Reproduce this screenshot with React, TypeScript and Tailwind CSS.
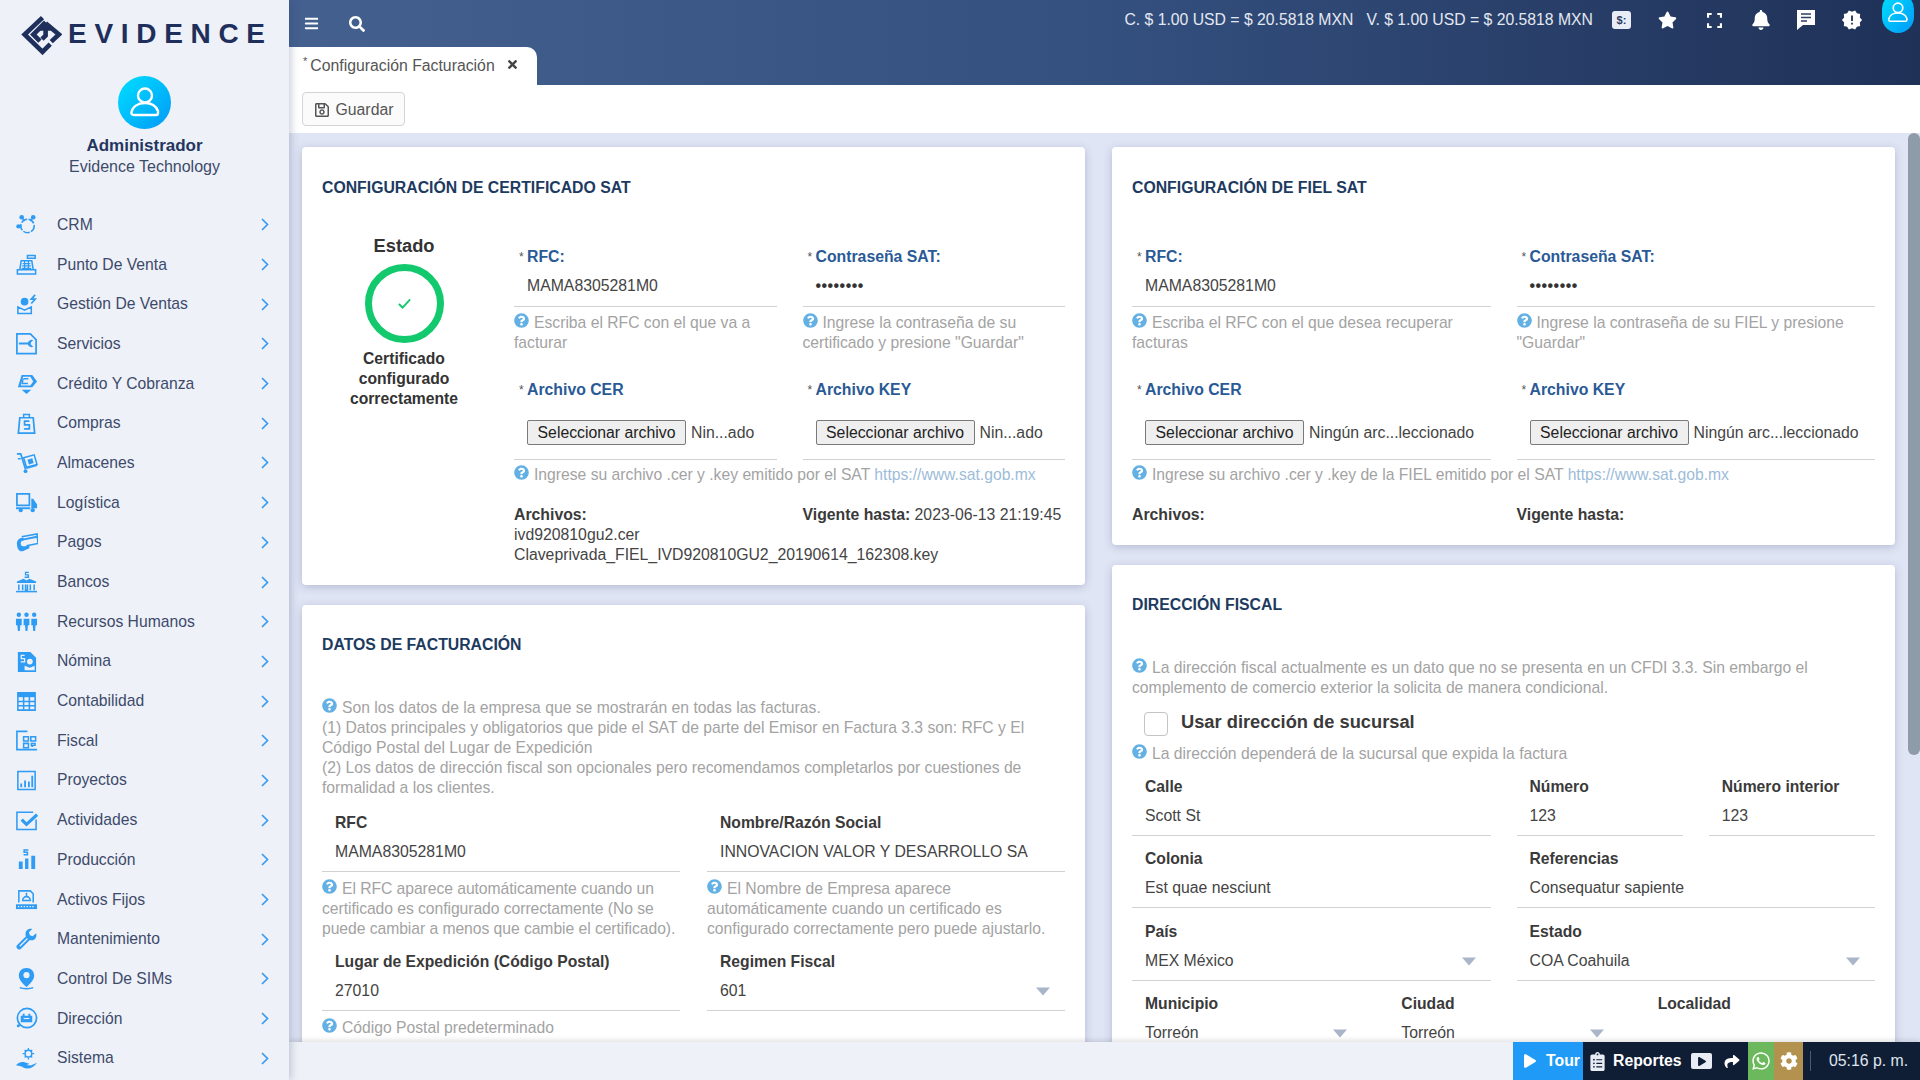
import type { ReactNode } from 'react';
import {
  FaBars,
  FaBell,
  FaCog,
  FaPlay,
  FaQuestionCircle,
  FaRegSave,
  FaSearch,
  FaShare,
  FaStar,
  FaTimes,
  FaWhatsapp,
  FaClipboardList,
} from 'react-icons/fa';
import { MdNewReleases } from 'react-icons/md';

// Sidebar glyphs, drawn by hand on a 24 box
const s = { fill: 'none', stroke: 'currentColor', strokeWidth: 1.6 };

const MENU: { label: string; icon: ReactNode }[] = [
  {
    label: 'CRM',
    icon: (
      <>
        <circle cx="13" cy="13.5" r="7" {...s} strokeDasharray="7 1.5" />
        <circle cx="7" cy="4.5" r="2.4" fill="currentColor" />
        <circle cx="19" cy="4.5" r="2.4" fill="currentColor" />
        <circle cx="3.5" cy="14" r="2.2" fill="currentColor" />
        <path d="M8 6l2 2.5M18 6l-2 2.5M5 14h2" {...s} />
      </>
    ),
  },
  {
    label: 'Punto De Venta',
    icon: (
      <>
        <path d="M2.5 17.5h19v4.5h-19zM5 17.5l1.5-9.5h11l1.5 9.5" {...s} />
        <path d="M8 11h8M7.5 13.5h9M7 16h10M10 8v8M14 8v8" {...s} strokeWidth={1.3} />
        <path d="M13 2.500h8v3h-8z" {...s} />
      </>
    ),
  },
  {
    label: 'Gestión De Ventas',
    icon: (
      <>
        <circle cx="10" cy="9" r="4" fill="currentColor" />
        <path d="M3 14.500v7h14v-7l-7 3.500z" {...s} />
        <path d="M21 2l-4 4.500h4l-4 4.500" {...s} strokeWidth={1.8} />
      </>
    ),
  },
  {
    label: 'Servicios',
    icon: (
      <>
        <path d="M2 2h14l6 6v14.500H2z" {...s} strokeWidth={1.8} />
        <path d="M4 11h9.500a4 4 0 0 1 5.500-2.500l-2.500 2.500v2l2.500 2.500a4 4 0 0 1-5.500-2.500H4z" fill="currentColor" />
      </>
    ),
  },
  {
    label: 'Crédito Y Cobranza',
    icon: (
      <>
        <path d="M7 3h11l5 7-5 6H3z" fill="currentColor" />
        <path d="M8.500 5h7.500l3 5-3 4H6z" fill="#eef1f7" />
        <path d="M9 7h5M8.500 7l-1 5h6" {...s} strokeWidth={1.4} />
        <path d="M7 18.500h10l-5 4.500z" fill="currentColor" />
      </>
    ),
  },
  {
    label: 'Compras',
    icon: (
      <>
        <path d="M5 6h14l1.500 16H3.500z" {...s} strokeWidth={1.8} />
        <path d="M9 6V2.500h6V6" {...s} />
        <path d="M15 9.500H10v4h5v4H9.500" {...s} strokeWidth={1.8} />
      </>
    ),
  },
  {
    label: 'Almacenes',
    icon: (
      <>
        <path d="M2 3h4l5 16" {...s} strokeWidth={1.8} />
        <path d="M9 7l11-3 3 10-11 3zM3 8l3 0" {...s} />
        <path d="M13 9l5-1.500 1.500 5-5 1.500z" fill="currentColor" />
        <circle cx="11" cy="21" r="2" fill="currentColor" />
        <path d="M12 18l11-3" {...s} />
      </>
    ),
  },
  {
    label: 'Logística',
    icon: (
      <>
        <path d="M2 3h13v12H2z" {...s} strokeWidth={1.8} />
        <path d="M17 8h2l4 6v4H17z" fill="currentColor" />
        <path d="M1 17h15v2H1z" fill="currentColor" />
        <circle cx="6" cy="20" r="2.200" fill="currentColor" />
        <circle cx="18.500" cy="20" r="2.200" fill="currentColor" />
      </>
    ),
  },
  {
    label: 'Pagos',
    icon: (
      <>
        <path d="M7 6l16-3 1 10-12 2.500" {...s} strokeWidth={1.6} />
        <path d="M8 9l15-3" {...s} strokeWidth={2} />
        <path d="M2 13c0-4 3-6 7-6v3c-2 0-3 1-3 3s1 3 4 3l5-1v3l-7 3c-3 1-6-2-6-8z" fill="currentColor" />
      </>
    ),
  },
  {
    label: 'Bancos',
    icon: (
      <>
        <path d="M2 11l7-3 3 2 3-2 7 3v1.500H2z" fill="currentColor" />
        <path d="M14.500 1.500H11v2.500h3v2.500H10" {...s} strokeWidth={1.4} />
        <path d="M4 14v6M8 14v6M16 14v6M20 14v6M11 14v6h2v-6" {...s} />
        <path d="M1 21.500h22" {...s} />
      </>
    ),
  },
  {
    label: 'Recursos Humanos',
    icon: (
      <>
        <circle cx="4" cy="5" r="2.300" fill="currentColor" />
        <circle cx="12" cy="5" r="2.300" fill="currentColor" />
        <circle cx="20" cy="5" r="2.300" fill="currentColor" />
        <path d="M1 9h6v7H5.500l-.5 6H3l-.5-6H1zM9 9h6v7h-1.500l-.5 6h-2l-.5-6H9zM17 9h6v7h-1.500l-.5 6h-2l-.5-6H17z" fill="currentColor" />
      </>
    ),
  },
  {
    label: 'Nómina',
    icon: (
      <>
        <path d="M3 2h13l6 6v15H3z" fill="currentColor" />
        <path d="M10 5.500H6.500V9H10v3.500H6" fill="none" stroke="#eef1f7" strokeWidth="1.3" />
        <circle cx="15.500" cy="12" r="3" fill="#eef1f7" />
        <path d="M10 16.500l5.500 2 5-2v4.500H10z" fill="#eef1f7" />
      </>
    ),
  },
  {
    label: 'Contabilidad',
    icon: (
      <>
        <path d="M3 3h18v18H3z" {...s} />
        <path d="M3 3h18v4.500H3z" fill="currentColor" />
        <path d="M3 12h18M3 16.500h18M9 7v14M15 7v14" {...s} />
      </>
    ),
  },
  {
    label: 'Fiscal',
    icon: (
      <>
        <path d="M13 2.500H2v19h21" {...s} strokeWidth={1.7} />
        <path d="M9 8h5v4.500H9zM16.500 8h5v4.500h-5zM9 15h5v4.500H9z" {...s} />
        <path d="M17 15h4v2h-4zM17 18h2" {...s} strokeWidth={1.4} />
      </>
    ),
  },
  {
    label: 'Proyectos',
    icon: (
      <>
        <path d="M3 2.500h18v19H3z" {...s} />
        <path d="M6.500 15v4M10.500 12v7M14.500 13v6M18 7v12" {...s} strokeWidth={1.9} />
      </>
    ),
  },
  {
    label: 'Actividades',
    icon: (
      <>
        <path d="M19 3.500H2v18h20V11" {...s} />
        <path d="M7 11l5 5 11-10" fill="none" stroke="currentColor" strokeWidth="3.200" />
      </>
    ),
  },
  {
    label: 'Producción',
    icon: (
      <>
        <path d="M4 14h4v8H4zM10.500 11h3.500v11h-3.500zM17 8h4v14h-4z" fill="currentColor" />
        <path d="M14 2H9.500v2.500H13V7H9" {...s} strokeWidth={1.5} />
      </>
    ),
  },
  {
    label: 'Activos Fijos',
    icon: (
      <>
        <path d="M4 15V3h12l3 3v9" {...s} />
        <path d="M1 17h22v5H1z" fill="currentColor" />
        <path d="M12 5v4M8 13a4 4 0 0 1 8 0z" {...s} />
        <path d="M3 19.500h18" stroke="#eef1f7" strokeWidth="1.200" strokeDasharray="1.500 1.500" />
      </>
    ),
  },
  {
    label: 'Mantenimiento',
    icon: (
      <>
        <path
          d="M22 5.500l-3.500 3-3-1-1-3L18 1c-3-1-7 1-7 5 0 1 0 2 .5 2.500L2 18c-2 2 2 6 4 4l9.500-9.500c4 1.500 8-2 6.500-7z"
          fill="currentColor"
        />
        <path d="M5 19l8-8" stroke="#eef1f7" strokeWidth="1.300" />
      </>
    ),
  },
  {
    label: 'Control De SIMs',
    icon: (
      <>
        <path d="M12 1C7 1 4 4.500 4 9c0 4.500 5 9 8 12 3-3 8-7.500 8-12 0-4.500-3-8-8-8z" fill="currentColor" />
        <circle cx="12" cy="8.500" r="3.200" fill="#eef1f7" />
        <path d="M5 21.500c3 1.500 11 1.500 14 0" {...s} />
      </>
    ),
  },
  {
    label: 'Dirección',
    icon: (
      <>
        <circle cx="12.500" cy="11.500" r="10" {...s} strokeWidth={1.8} />
        <path d="M6 9h12v7H6zM8 7h2v2H8zM14 7h2v2h-2z" fill="currentColor" />
        <path d="M9 12h6" stroke="#eef1f7" strokeWidth="1.200" />
        <circle cx="3.500" cy="19.500" r="1.600" fill="currentColor" />
      </>
    ),
  },
  {
    label: 'Sistema',
    icon: (
      <>
        <circle cx="14" cy="7" r="3.500" {...s} />
        <path d="M14 1v2M14 11v2M8 7h2M18 7h2M10 3l1.500 1.500M18 3l-1.500 1.500M10 11l1.500-1.500M18 11l-1.500-1.500" {...s} strokeWidth={1.3} />
        <path d="M1 19c3-3 6-4 9-3l5 1.500-3 1.500h5l6-2.500c-3 4-6 6-10 6-3 0-5-2-7-2.500z" fill="currentColor" />
      </>
    ),
  },
];

function Sidebar() {
  return (
    <aside className="w-[289px] shrink-0 bg-[#eef1f7] flex flex-col shadow-[2px_0_8px_rgba(50,60,110,0.25)] z-20">
      <div className="h-[205px] shrink-0 flex flex-col items-center">
        {/* Logo */}
        <div className="flex items-center h-[42px] mt-[13px] w-full pl-[21px]">
          <svg viewBox="0 0 40 40" className="w-[41px] h-[41px] shrink-0" fill="none" stroke="#1e2f5c" strokeWidth="4.500">
            <path d="M21 3.500L3.500 20 21 37l7.500-7.500" />
            <path d="M24 8L12 20l6.500 6.500" />
            <path d="M18 14h11.500M24 9l13 11-7.500 7" />
            <path d="M24 15v6l-3.500 3.500" />
          </svg>
          <span className="ml-[6px] text-[28px] leading-none font-bold tracking-[7.700px] text-[#1e2f5c]">EVIDENCE</span>
        </div>
        {/* Avatar */}
        <div className="mt-[21px] w-[53px] h-[53px] rounded-full bg-gradient-to-br from-[#00e0ff] to-[#0a98f5] flex items-center justify-center">
          <UserGlyph className="w-[38px] h-[38px]" />
        </div>
        <div className="mt-[7px] text-[17px] leading-[20px] font-bold text-[#24365f]">Administrador</div>
        <div className="mt-px text-[16px] leading-[20px] text-[#3d4a6b]">Evidence Technology</div>
      </div>
      <nav className="flex flex-col">
        {MENU.map((item) => (
          <div key={item.label} className="h-[39.700px] flex items-center pl-[15px] pr-[20px] text-[#3d4a6b]">
            <svg viewBox="0 0 24 24" className="w-[23px] h-[23px] shrink-0 text-[#2e9bf5]">
              {item.icon}
            </svg>
            <span className="ml-[19px] flex-1 text-[15.700px] leading-[20px]">{item.label}</span>
            <svg viewBox="0 0 8 13" className="w-[8px] h-[13px]" fill="none" stroke="#3a9bf0" strokeWidth="1.700">
              <path d="M1 1l5.500 5.500L1 12" />
            </svg>
          </div>
        ))}
      </nav>
    </aside>
  );
}

function UserGlyph({ className }: { className: string }) {
  return (
    <svg viewBox="0 0 38 38" className={className} fill="none" stroke="#fff" strokeWidth="2.400" strokeLinecap="round">
      <circle cx="19" cy="11.500" r="7" />
      <path d="M29 31H8c-2 0-3-1-2.500-3 1-5 6-9 13.500-9 6 0 11 3 13 8v2c0 1.500-1 2-2 2" />
    </svg>
  );
}

function Header() {
  return (
    <header className="h-[85px] shrink-0 bg-gradient-to-r from-[#43608f] via-[#34507f] to-[#1f3157] flex flex-col">
      <div className="h-[47px] pb-[7px] flex items-center text-white">
        <FaBars className="ml-[15px] mt-[7px] w-[15px] h-[15px]" />
        <FaSearch className="ml-[30px] mt-[7px] w-[16px] h-[16px]" />
        <div className="flex-1" />
        <span className="text-[15.750px] leading-[20px] text-[#e3e8f2]">C. $ 1.00 USD = $ 20.5818 MXN</span>
        <span className="ml-[13px] text-[15.750px] leading-[20px] text-[#e3e8f2]">V. $ 1.00 USD = $ 20.5818 MXN</span>
        <span className="ml-[19px] w-[19px] h-[18px] rounded-[3px] bg-[#e8edf5] text-[#2c4063] text-[11px] font-bold flex items-center justify-center">
          $:
        </span>
        <FaStar className="ml-[27px] w-[19px] h-[18px]" />
        <svg viewBox="0 0 16 16" className="ml-[30px] w-[15px] h-[15px]" fill="none" stroke="#fff" strokeWidth="2.500">
          <path d="M1 5V1h4M11 1h4v4M15 11v4h-4M5 15H1v-4" />
        </svg>
        <FaBell className="ml-[30px] w-[18px] h-[20px]" />
        <svg viewBox="0 0 18 20" className="ml-[27px] w-[18px] h-[20px]">
          <path d="M0 0h18v15H6l-6 5z" fill="#fff" />
          <path d="M4 4h10M4 7.500h10M4 11h6" stroke="#2c4063" strokeWidth="1.500" />
        </svg>
        <MdNewReleases className="ml-[26px] w-[22px] h-[22px]" />
        <div className="ml-[19px] mr-[6px] mb-[7px] -mt-[7px] w-[32px] h-[40px] rounded-b-full rounded-t-full bg-gradient-to-br from-[#00e0ff] to-[#0a98f5] flex items-center justify-center">
          <UserGlyph className="w-[26px] h-[26px]" />
        </div>
      </div>
      <div className="h-[38px] w-[248px] bg-white rounded-tr-[10px] flex items-center pl-[14px] text-[#555]">
        <span className="text-[11px] self-start mt-[6px] mr-[3px]">*</span>
        <span className="text-[15.800px] leading-[20px]">Configuración Facturación</span>
        <FaTimes className="ml-[12px] -mt-[3px] w-[11px] h-[13px] text-[#444]" />
      </div>
    </header>
  );
}

function QuestionMark() {
  return <FaQuestionCircle className="inline w-[15px] h-[15px] text-[#62b0e4] mr-[5px] align-[-1px] relative -top-[1px]" />;
}

function Help({ children, className = '' }: { children: ReactNode; className?: string }) {
  return (
    <div className={`text-[15.700px] leading-[20px] text-[#a3a3a3] ${className}`}>
      <QuestionMark />
      {children}
    </div>
  );
}

function Label({ children }: { children: ReactNode }) {
  return <div className="h-[21px] pt-[1px] px-[13px] text-[15.700px] leading-[20px] font-bold text-[#3a3a3a]">{children}</div>;
}

function Arrow() {
  return (
    <svg viewBox="0 0 16 9" className="w-[16px] h-[9px] shrink-0">
      <path d="M1 0.500h14L8 8.500z" fill="#a9b5c9" />
    </svg>
  );
}

function Field({ label, value, select }: { label: string; value: string; select?: boolean }) {
  return (
    <div className="min-w-0">
      <Label>{label}</Label>
      <div className="h-[39px] border-b border-[#d2d2d2] pl-[13px] pr-[14px] flex items-center justify-between text-[15.800px] text-[#444]">
        <span>{value}</span>
        {select && <Arrow />}
      </div>
    </div>
  );
}

function SatLabel({ children }: { children: ReactNode }) {
  return (
    <div className="pl-[5px] flex text-[15.800px] leading-[20px] font-bold text-[#2a5a96]">
      <span className="w-[8px] text-[12px] font-normal text-[#555]">*</span>
      {children}
    </div>
  );
}

function FileInput({ name }: { name: string }) {
  return (
    <div className="h-[60px] border-b border-[#d2d2d2] pl-[13px] pt-[6px] flex items-center">
      <span className="h-[25px] w-[159px] shrink-0 border border-[#7a7a7a] rounded-[2px] bg-[#efefef] text-[15.800px] text-[#222] flex items-center justify-center">
        Seleccionar archivo
      </span>
      <span className="ml-[5px] text-[15.800px] text-[#444] whitespace-nowrap">{name}</span>
    </div>
  );
}

function Card({ title, children, className = '' }: { title: string; children: ReactNode; className?: string }) {
  return (
    <section className={`bg-white rounded-[4px] shadow-[0_2px_8px_rgba(50,60,110,0.25)] px-[20px] ${className}`}>
      <h2 className="text-[15.800px] leading-[20px] font-bold text-[#1d3a5f]">{title}</h2>
      {children}
    </section>
  );
}

function SatForm({
  help1,
  help2,
  help3,
  fileName,
  files,
}: {
  help1: string;
  help2: string;
  help3: string;
  fileName: string;
  files: ReactNode;
}) {
  return (
    <div>
      <div className="grid grid-cols-2 gap-x-[26px]">
        <div>
          <SatLabel>RFC:</SatLabel>
          <div className="h-[40px] border-b border-[#d2d2d2] pl-[13px] pb-[2px] flex items-center text-[15.800px] text-[#444]">MAMA8305281M0</div>
          <Help className="mt-[6px]">{help1}</Help>
        </div>
        <div>
          <SatLabel>Contraseña SAT:</SatLabel>
          <div className="h-[40px] border-b border-[#d2d2d2] pl-[13px] pb-[2px] flex items-center text-[15.800px] font-bold tracking-[0.500px] text-[#333]">
            ••••••••
          </div>
          <Help className="mt-[6px]">{help2}</Help>
        </div>
      </div>
      <div className="grid grid-cols-2 gap-x-[26px] mt-[27px]">
        <div>
          <SatLabel>Archivo CER</SatLabel>
          <FileInput name={fileName} />
        </div>
        <div>
          <SatLabel>Archivo KEY</SatLabel>
          <FileInput name={fileName} />
        </div>
      </div>
      <div className="mt-[5px] text-[15.700px] leading-[20px] text-[#a3a3a3]">
        <QuestionMark />
        {help3} <span className="text-[#9dbcd9]">https://www.sat.gob.mx</span>
      </div>
      {files}
    </div>
  );
}

function Footer() {
  return (
    <footer className="h-[38px] shrink-0 bg-[#eef1f7] shadow-[0_-2px_5px_rgba(0,0,0,0.12)] flex justify-end text-white z-10">
      <div className="w-[70px] bg-[#1f9bf7] flex items-center pl-[11px]">
        <FaPlay className="w-[12px] h-[14px]" />
        <span className="ml-[10px] text-[15.800px] font-bold">Tour</span>
      </div>
      <div className="w-[165px] bg-[#0f1e35] flex items-center pl-[6px]">
        <FaClipboardList className="w-[17px] h-[19px] text-[#e8edf5]" />
        <span className="ml-[7px] text-[15.800px] font-bold">Reportes</span>
        <span className="ml-[10px] w-[21px] h-[16px] rounded-[2px] bg-[#e8edf5] flex items-center justify-center">
          <FaPlay className="w-[8px] h-[9px] text-[#0f1e35]" />
        </span>
        <FaShare className="ml-[11px] w-[18px] h-[15px]" />
      </div>
      <div className="w-[26px] bg-[#6cb85c] flex items-center justify-center">
        <FaWhatsapp className="w-[20px] h-[20px]" />
      </div>
      <div className="w-[29px] bg-[#b3924f] flex items-center justify-center">
        <FaCog className="w-[18px] h-[18px]" />
      </div>
      <div className="w-[117px] bg-[#0f1e35] flex items-center">
        <span className="ml-[7px] w-px h-[20px] bg-[#4a5a72]" />
        <span className="ml-[18px] text-[15.800px] text-[#dfe5ee] whitespace-nowrap">05:16 p. m.</span>
      </div>
    </footer>
  );
}

export default function App() {
  return (
    <div className="w-[1920px] h-[1080px] flex overflow-hidden font-['Liberation_Sans',Arial,sans-serif] bg-[#e0e5f5]">
      <Sidebar />
      <div className="flex-1 min-w-0 flex flex-col">
        <Header />
        <div className="h-[48px] shrink-0 bg-white pl-[13px] pt-[7px]">
          <button className="h-[34px] w-[103px] pt-[1px] border border-[#d4d4d4] rounded-[4px] bg-[#fbfbfb] flex items-center justify-center text-[15.800px] text-[#555]">
            <FaRegSave className="w-[16px] h-[16px] mr-[6px]" />
            Guardar
          </button>
        </div>
        <div className="flex-1 min-h-0 flex">
          <main className="flex-1 min-w-0 overflow-hidden pl-[13px] pr-[13px] pt-[14px] grid grid-cols-2 gap-x-[27px] items-start">
            {/* Left column */}
            <div className="flex flex-col gap-[20px]">
              <Card title="CONFIGURACIÓN DE CERTIFICADO SAT" className="pt-[31px]">
                <div className="flex mt-[37px] pb-[20px]">
                  <div className="w-[164px] mr-[28px] shrink-0 flex flex-col items-center text-center text-[#333]">
                    <div className="text-[18.300px] leading-[22px] font-bold">Estado</div>
                    <div className="mt-[7px] w-[79px] h-[79px] rounded-full border-[7px] border-[#13c96d] flex items-center justify-center">
                      <svg viewBox="0 0 16 16" className="w-[15px] h-[15px]" fill="none" stroke="#13c96d" strokeWidth="2">
                        <path d="M2 8.500l4 4 8-9" />
                      </svg>
                    </div>
                    <div className="mt-[6px] text-[15.700px] leading-[20px] font-bold">
                      Certificado
                      <br />
                      configurado
                      <br />
                      correctamente
                    </div>
                  </div>
                  <div className="flex-1 min-w-0 pt-[12px]">
                    <SatForm
                      help1="Escriba el RFC con el que va a facturar"
                      help2={'Ingrese la contraseña de su certificado y presione "Guardar"'}
                      help3="Ingrese su archivo .cer y .key emitido por el SAT"
                      fileName="Nin...ado"
                      files={
                        <div className="grid grid-cols-2 gap-x-[26px] mt-[20px] text-[15.800px] leading-[20px] text-[#444]">
                          <div>
                            <b className="text-[#3a3a3a]">Archivos:</b>
                          </div>
                          <div className="whitespace-nowrap">
                            <b className="text-[#3a3a3a]">Vigente hasta:</b> 2023-06-13 21:19:45
                          </div>
                          <div className="col-span-2">
                            ivd920810gu2.cer
                            <br />
                            Claveprivada_FIEL_IVD920810GU2_20190614_162308.key
                          </div>
                        </div>
                      }
                    />
                  </div>
                </div>
              </Card>
              <Card title="DATOS DE FACTURACIÓN" className="pt-[30px] pb-[20px]">
                <Help className="mt-[43px]">
                  Son los datos de la empresa que se mostrarán en todas las facturas.
                  <br />
                  (1) Datos principales y obligatorios que pide el SAT de parte del Emisor en Factura 3.3 son: RFC y El Código Postal del Lugar de Expedición
                  <br />
                  (2) Los datos de dirección fiscal son opcionales pero recomendamos completarlos por cuestiones de formalidad a los clientes.
                </Help>
                <div className="grid grid-cols-2 gap-x-[27px] mt-[14px]">
                  <Field label="RFC" value="MAMA8305281M0" />
                  <Field label="Nombre/Razón Social" value="INNOVACION VALOR Y DESARROLLO SA" />
                  <Help className="mt-[7px] tracking-[-0.050px]">El RFC aparece automáticamente cuando un certificado es configurado correctamente (No se puede cambiar a menos que cambie el certificado).</Help>
                  <Help className="mt-[7px]">El Nombre de Empresa aparece automáticamente cuando un certificado es configurado correctamente pero puede ajustarlo.</Help>
                </div>
                <div className="grid grid-cols-2 gap-x-[27px] mt-[12px]">
                  <Field label="Lugar de Expedición (Código Postal)" value="27010" />
                  <Field label="Regimen Fiscal" value="601" select />
                  <Help className="mt-[7px]">Código Postal predeterminado</Help>
                </div>
              </Card>
            </div>
            {/* Right column */}
            <div className="flex flex-col gap-[20px]">
              <Card title="CONFIGURACIÓN DE FIEL SAT" className="pt-[31px]">
                <div className="mt-[49px] pb-[20px]">
                  <SatForm
                    help1="Escriba el RFC con el que desea recuperar facturas"
                    help2={'Ingrese la contraseña de su FIEL y presione "Guardar"'}
                    help3="Ingrese su archivo .cer y .key de la FIEL emitido por el SAT"
                    fileName="Ningún arc...leccionado"
                    files={
                      <div className="grid grid-cols-2 gap-x-[26px] mt-[20px] text-[15.800px] leading-[20px] font-bold text-[#3a3a3a]">
                        <div>Archivos:</div>
                        <div>Vigente hasta:</div>
                      </div>
                    }
                  />
                </div>
              </Card>
              <Card title="DIRECCIÓN FISCAL" className="pt-[30px] pb-[20px]">
                <Help className="mt-[43px]">
                  La dirección fiscal actualmente es un dato que no se presenta en un CFDI 3.3. Sin embargo el complemento de comercio exterior la solicita de manera condicional.
                </Help>
                <div className="mt-[14px] h-[32px] flex items-start pl-[12px]">
                  <span className="w-[24px] h-[24px] border border-[#c4c4c4] rounded-[4px]" />
                  <span className="ml-[13px] text-[18.300px] leading-[20px] font-bold text-[#3a3a3a]">Usar dirección de sucursal</span>
                </div>
                <Help>La dirección dependerá de la sucursal que expida la factura</Help>
                <div className="grid grid-cols-2 gap-x-[26px] mt-[12px]">
                  <Field label="Calle" value="Scott St" />
                  <div className="grid grid-cols-2 gap-x-[26px]">
                    <Field label="Número" value="123" />
                    <Field label="Número interior" value="123" />
                  </div>
                </div>
                <div className="grid grid-cols-2 gap-x-[26px] mt-[12px]">
                  <Field label="Colonia" value="Est quae nesciunt" />
                  <Field label="Referencias" value="Consequatur sapiente" />
                </div>
                <div className="grid grid-cols-2 gap-x-[26px] mt-[13px]">
                  <Field label="País" value="MEX México" select />
                  <Field label="Estado" value="COA Coahuila" select />
                </div>
                <div className="grid grid-cols-3 gap-x-[26px] mt-[12px]">
                  <Field label="Municipio" value="Torreón" select />
                  <Field label="Ciudad" value="Torreón" select />
                  <Label>Localidad</Label>
                </div>
              </Card>
            </div>
          </main>
          {/* Scrollbar */}
          <div className="w-[12px] shrink-0">
            <div className="h-[622px] bg-[#8d9ca8] rounded-[6px]" />
          </div>
        </div>
        <Footer />
      </div>
    </div>
  );
}
